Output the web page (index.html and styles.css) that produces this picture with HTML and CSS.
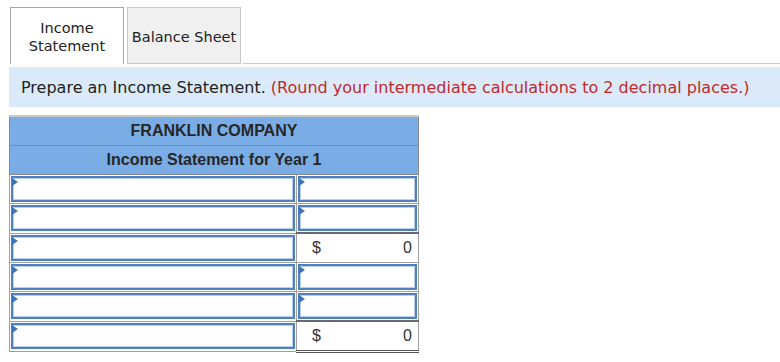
FILE: index.html
```html
<!DOCTYPE html>
<html lang="en">
<head>
    <meta charset="UTF-8">
    <title>Income Statement</title>
    <link rel="stylesheet" href="styles.css">
</head>
<body>
    <div class="tabs">
        <div class="tab active">Income<br>Statement</div>
        <div class="tab">Balance Sheet</div>
        <div class="tab-rest"></div>
    </div>

    <div class="prompt">
        Prepare an Income Statement. <span class="hint">(Round your intermediate calculations to 2 decimal places.)</span>
    </div>

    <table class="statement">
        <thead>
            <tr><th colspan="2">FRANKLIN COMPANY</th></tr>
            <tr><th colspan="2">Income Statement for Year 1</th></tr>
        </thead>
        <tbody>
            <tr>
                <td class="label"><div class="field"></div></td>
                <td class="amount"><div class="field"></div></td>
            </tr>
            <tr>
                <td class="label"><div class="field"></div></td>
                <td class="amount"><div class="field"></div></td>
            </tr>
            <tr>
                <td class="label"><div class="field"></div></td>
                <td class="amount total"><div class="value"><span>$</span><span>0</span></div></td>
            </tr>
            <tr>
                <td class="label"><div class="field"></div></td>
                <td class="amount"><div class="field"></div></td>
            </tr>
            <tr>
                <td class="label"><div class="field"></div></td>
                <td class="amount"><div class="field"></div></td>
            </tr>
            <tr>
                <td class="label"><div class="field"></div></td>
                <td class="amount total final"><div class="value"><span>$</span><span>0</span></div></td>
            </tr>
        </tbody>
    </table>
</body>
</html>
```

FILE: styles.css
```css
body {
    margin: 0;
    padding: 7px 0 0 9px;
    background: #fff;
    font-family: "DejaVu Sans", Verdana, sans-serif;
    color: #222;
}

.tabs {
    display: flex;
    align-items: flex-end;
    height: 57px;
}
.tab {
    box-sizing: border-box;
    width: 114px;
    height: 57px;
    margin-left: 1px;
    margin-right: 2px;
    padding-top: 2px;
    border: 1px solid #c8c8c8;
    border-bottom: none;
    background: #f0f0f0;
    display: flex;
    align-items: center;
    justify-content: center;
    text-align: center;
    font-size: 14.5px;
    line-height: 18px;
    color: #222;
}
.tab.active {
    background: #fff;
    border-color: #aaa;
}
.tab:not(.active) {
    border-bottom: 1px solid #c8c8c8;
}
.tab-rest {
    flex-grow: 1;
    border-bottom: 1px solid #c8c8c8;
}

.prompt {
    margin-top: 3px;
    height: 40px;
    padding-left: 12px;
    display: flex;
    align-items: center;
    background: #dbeaf8;
    font-size: 16px;
    color: #222;
    white-space: nowrap;
}
.hint {
    color: #c0282d;
    margin-left: 5px;
}

.statement {
    margin-top: 8px;
    border-collapse: collapse;
    width: 410px;
    font-family: "Liberation Sans", Arial, sans-serif;
    border: 1px solid #9a9a9a;
    border-top-color: #c8c8c8;
}
.statement th {
    height: 28px;
    padding: 0;
    background: #7aade5;
    border: 1px solid #8a8a8a;
    font-size: 16px;
    font-weight: bold;
    color: #262626;
}
.statement thead tr:first-child th {
    border-top: 2px solid #c8c8c8;
}
.statement td {
    height: 28px;
    padding: 0;
    border: 1px solid #a0a0a0;
    vertical-align: middle;
}
.statement td.label {
    width: 286px;
}
.field {
    position: relative;
    box-sizing: border-box;
    height: 26px;
    margin: 0 1px;
    border: 2px solid #4f7fbd;
    background: #fff;
    box-shadow: inset 0 0 0 1px #b9d0ec;
}
.field::before {
    content: "";
    position: absolute;
    left: -1px;
    top: 0;
    border-top: 4px solid transparent;
    border-bottom: 4px solid transparent;
    border-left: 6px solid #3a74c0;
}
.total {
    border-top: 2px solid #6a6a6a !important;
}
.value {
    display: flex;
    justify-content: space-between;
    padding: 0 6px 0 15px;
    font-size: 16px;
    color: #333;
}
.final {
    border-bottom: 3px double #555 !important;
}
```
